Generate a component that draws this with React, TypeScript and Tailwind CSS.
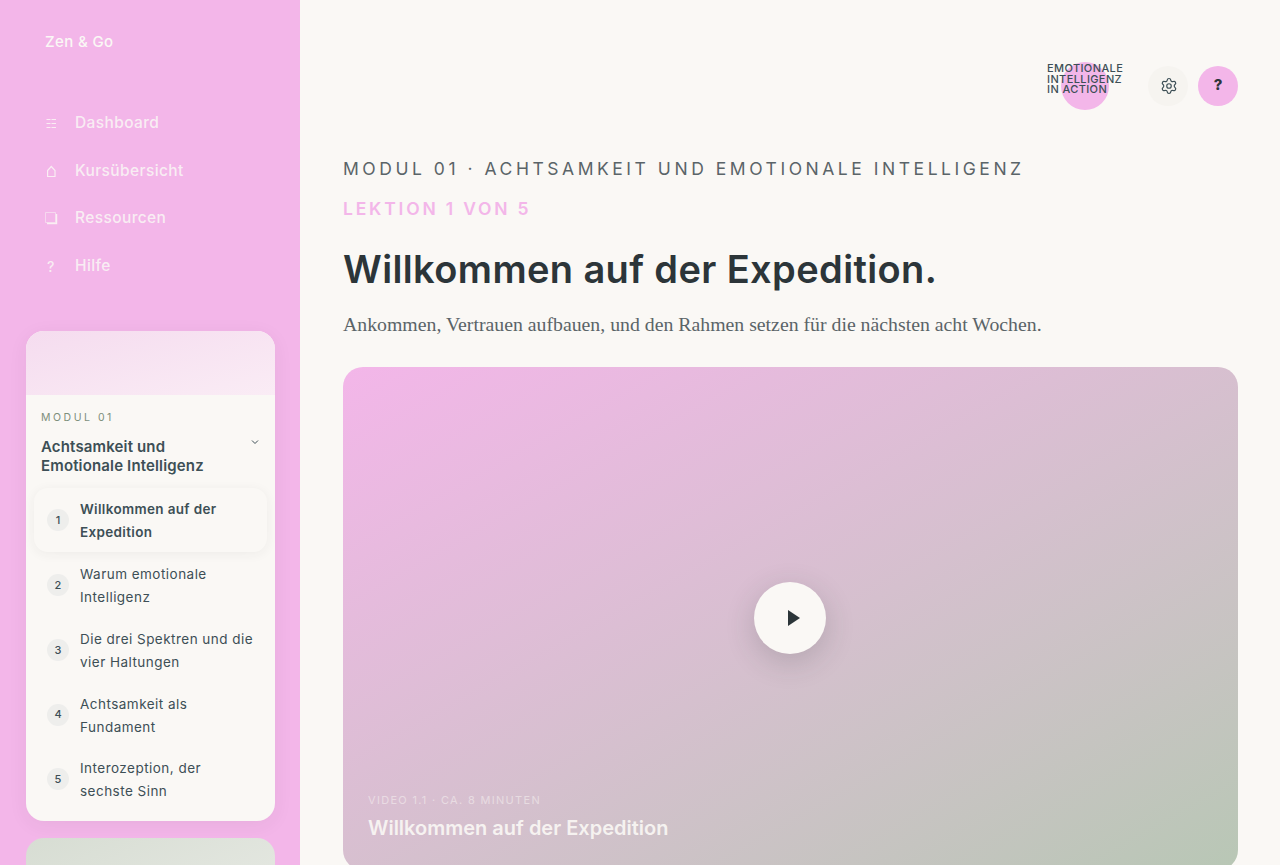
import { Settings } from "lucide-react";
import type { ReactNode } from "react";

const iconProps = { className: "h-[14px] w-[14px]", viewBox: "0 0 14 14", fill: "none" };

const nav: { icon: ReactNode; label: string }[] = [
  {
    icon: (
      <svg {...iconProps} stroke="currentColor" strokeWidth="1">
        <path d="M1.5 3.5H5.5M6.5 3.5H11M1.5 7.5H5.5M6.5 7.5H11M1.5 11.5H5.5M6.5 11.5H11" />
      </svg>
    ),
    label: "Dashboard",
  },
  {
    icon: (
      <svg {...iconProps} stroke="currentColor" strokeWidth="1.2">
        <path d="M2.6 12.5V6.5L6.3 2.5 10 6.5V12.5Z" />
      </svg>
    ),
    label: "Kursübersicht",
  },
  {
    icon: (
      <svg {...iconProps}>
        <path d="M0.5 0.5H10.5V10.5H0.5Z" stroke="currentColor" strokeOpacity="0.6" strokeWidth="1" />
        <path d="M11.5 2V11.5H2" stroke="currentColor" strokeWidth="1.5" />
      </svg>
    ),
    label: "Ressourcen",
  },
  { icon: <span className="block pl-[2px] text-[14px] leading-[14px]">?</span>, label: "Hilfe" },
];

const lessons = [
  ["Warum emotionale", "Intelligenz"],
  ["Die drei Spektren und die", "vier Haltungen"],
  ["Achtsamkeit als", "Fundament"],
  ["Interozeption, der", "sechste Sinn"],
];

const sans = "font-['Inter','Liberation_Sans',sans-serif]";

export default function App() {
  return (
    <div className={`flex h-[865px] overflow-hidden bg-[#faf8f5] ${sans}`}>
      <aside className="w-[300px] shrink-0 overflow-hidden bg-[#f3b6e9]">
        <div className="pl-[45px] pt-[32px] text-[15px] leading-[20px] font-medium tracking-[0.025em] text-[#faf8f5]">Zen &amp; Go</div>
        <nav className="mt-[46.3px] flex flex-col pl-[45px]">
          {nav.map((n) => (
            <div key={n.label} className="flex h-[47.9px] items-center text-[15.5px] font-medium text-[#faf8f5]/85">
              <span className="flex w-[30px] items-center pt-[2px]">{n.icon}</span>
              <span className="tracking-[0.025em]">{n.label}</span>
            </div>
          ))}
        </nav>
        <div className="mx-[26px] mt-[41.6px] w-[249px] overflow-hidden rounded-[18px] bg-[#faf8f5] shadow-[0_4px_20px_rgba(44,53,57,0.06)]">
          <div className="h-[64px] bg-gradient-to-br from-[#f5dcef] to-[#faecf5]" />
          <div className="px-[8px] pt-[16px] pb-[10px]">
            <div className="px-[7px] text-[10.5px] leading-[14px] tracking-[0.24em] text-[#7d8f7c]">MODUL 01</div>
            <div className="mt-[12px] flex items-start justify-between px-[7px]">
              <div className="text-[15px] leading-[19px] font-semibold tracking-[0.01em] text-[#3d4f56]">Achtsamkeit und<br />Emotionale Intelligenz</div>
              <svg className="mt-[1px] mr-[1px] h-[8px] w-[8px] text-[#3d4f56]" viewBox="0 0 8 8" fill="none" stroke="currentColor" strokeWidth="1">
                <path d="M1 2.5 4 5.5 7 2.5" />
              </svg>
            </div>
            <div className="mt-[13px] flex h-[64px] items-center gap-[11px] rounded-[14px] bg-[#faf8f5] pl-[13px] shadow-[0_2px_12px_rgba(44,53,57,0.06)]">
              <span className="flex h-[22px] w-[22px] shrink-0 items-center justify-center rounded-full bg-[#eeeeec] text-[11px] font-medium text-[#3d4f56]">1</span>
              <span className="pt-[2px] text-[13.5px] leading-[23px] font-semibold tracking-[0.025em] text-[#3d4f56]">Willkommen auf der<br />Expedition</span>
            </div>
            {lessons.map((l, i) => (
              <div key={l[0]} className="mt-[0.7px] flex h-[64px] items-center gap-[11px] pl-[13px] first:mt-0">
                <span className="flex h-[22px] w-[22px] shrink-0 items-center justify-center rounded-full bg-[#eeeeec] text-[11px] font-medium text-[#3d4f56]">{i + 2}</span>
                <span className="pt-[2px] text-[13.5px] leading-[23px] tracking-[0.035em] whitespace-nowrap text-[#3d4f56]">{l[0]}<br />{l[1]}</span>
              </div>
            ))}
          </div>
        </div>
        <div className="mx-[26px] mt-[17px] h-[120px] w-[249px] rounded-[18px] bg-gradient-to-br from-[#d7ddd3] to-[#eaece7]" />
      </aside>

      <main className="min-w-0 flex-1 overflow-hidden pr-[42px] pl-[43px]">
        <header className="flex h-[158px] items-start justify-end gap-[10px] pt-[66px]">
          <div className="relative mr-[15px] h-[40px] w-[76px]">
            <div className="absolute top-[-4px] left-[14px] h-[48px] w-[48px] rounded-full bg-[#f3b6e9]" />
            <div className="absolute top-[-3px] left-0 text-[11px] leading-[10.5px] font-medium tracking-[0.035em] whitespace-nowrap text-[#3d4f56]">EMOTIONALE<br />INTELLIGENZ<br />IN ACTION</div>
          </div>
          <button className="flex h-[40px] w-[40px] items-center justify-center rounded-full bg-[#f6f4f0] pl-[1px] text-[#3d4f56]">
            <Settings size={18} strokeWidth={1.6} />
          </button>
          <button className="flex h-[40px] w-[40px] items-center justify-center rounded-full bg-[#f3b6e9] pb-[1px] text-[15px] font-extrabold text-[#2c3539]">?</button>
        </header>
        <div className="text-[17.5px] leading-[22px] tracking-[0.202em] whitespace-nowrap text-[#5a6468]">MODUL 01 · ACHTSAMKEIT UND EMOTIONALE INTELLIGENZ</div>
        <div className="mt-[18px] text-[17.5px] leading-[22px] font-semibold tracking-[0.16em] text-[#f3b6e9]">LEKTION 1 VON 5</div>
        <h1 className="mt-[24px] text-[38px] leading-[50px] font-semibold tracking-[0.01em] text-[#2c3539]">Willkommen auf der Expedition.</h1>
        <p className="mt-[16px] font-['Liberation_Serif',serif] text-[19.8px] leading-[28px] text-[#5a6468]">Ankommen, Vertrauen aufbauen, und den Rahmen setzen für die nächsten acht Wochen.</p>
        <div className="relative mt-[29px] h-[503px] w-[895px] rounded-[20px] bg-gradient-to-br from-[#f3b6e9] to-[#b8c7b5]">
          <div className="absolute top-[215px] left-[411px] flex h-[72px] w-[72px] items-center justify-center rounded-full bg-[#faf8f5] shadow-[0_8px_30px_rgba(44,53,57,0.2)]">
            <svg className="ml-[7px] h-[16px] w-[12px]" viewBox="0 0 12 16"><path d="M0 0 12 8 0 16Z" fill="#2c3539" /></svg>
          </div>
          <div className="absolute bottom-[29px] left-[25px] text-[#faf8f5]">
            <div className="text-[11px] leading-[14px] tracking-[0.12em] opacity-50">VIDEO 1.1 · CA. 8 MINUTEN</div>
            <div className="mt-[8px] text-[20px] leading-[26px] font-semibold opacity-90">Willkommen auf der Expedition</div>
          </div>
        </div>
      </main>
    </div>
  );
}
